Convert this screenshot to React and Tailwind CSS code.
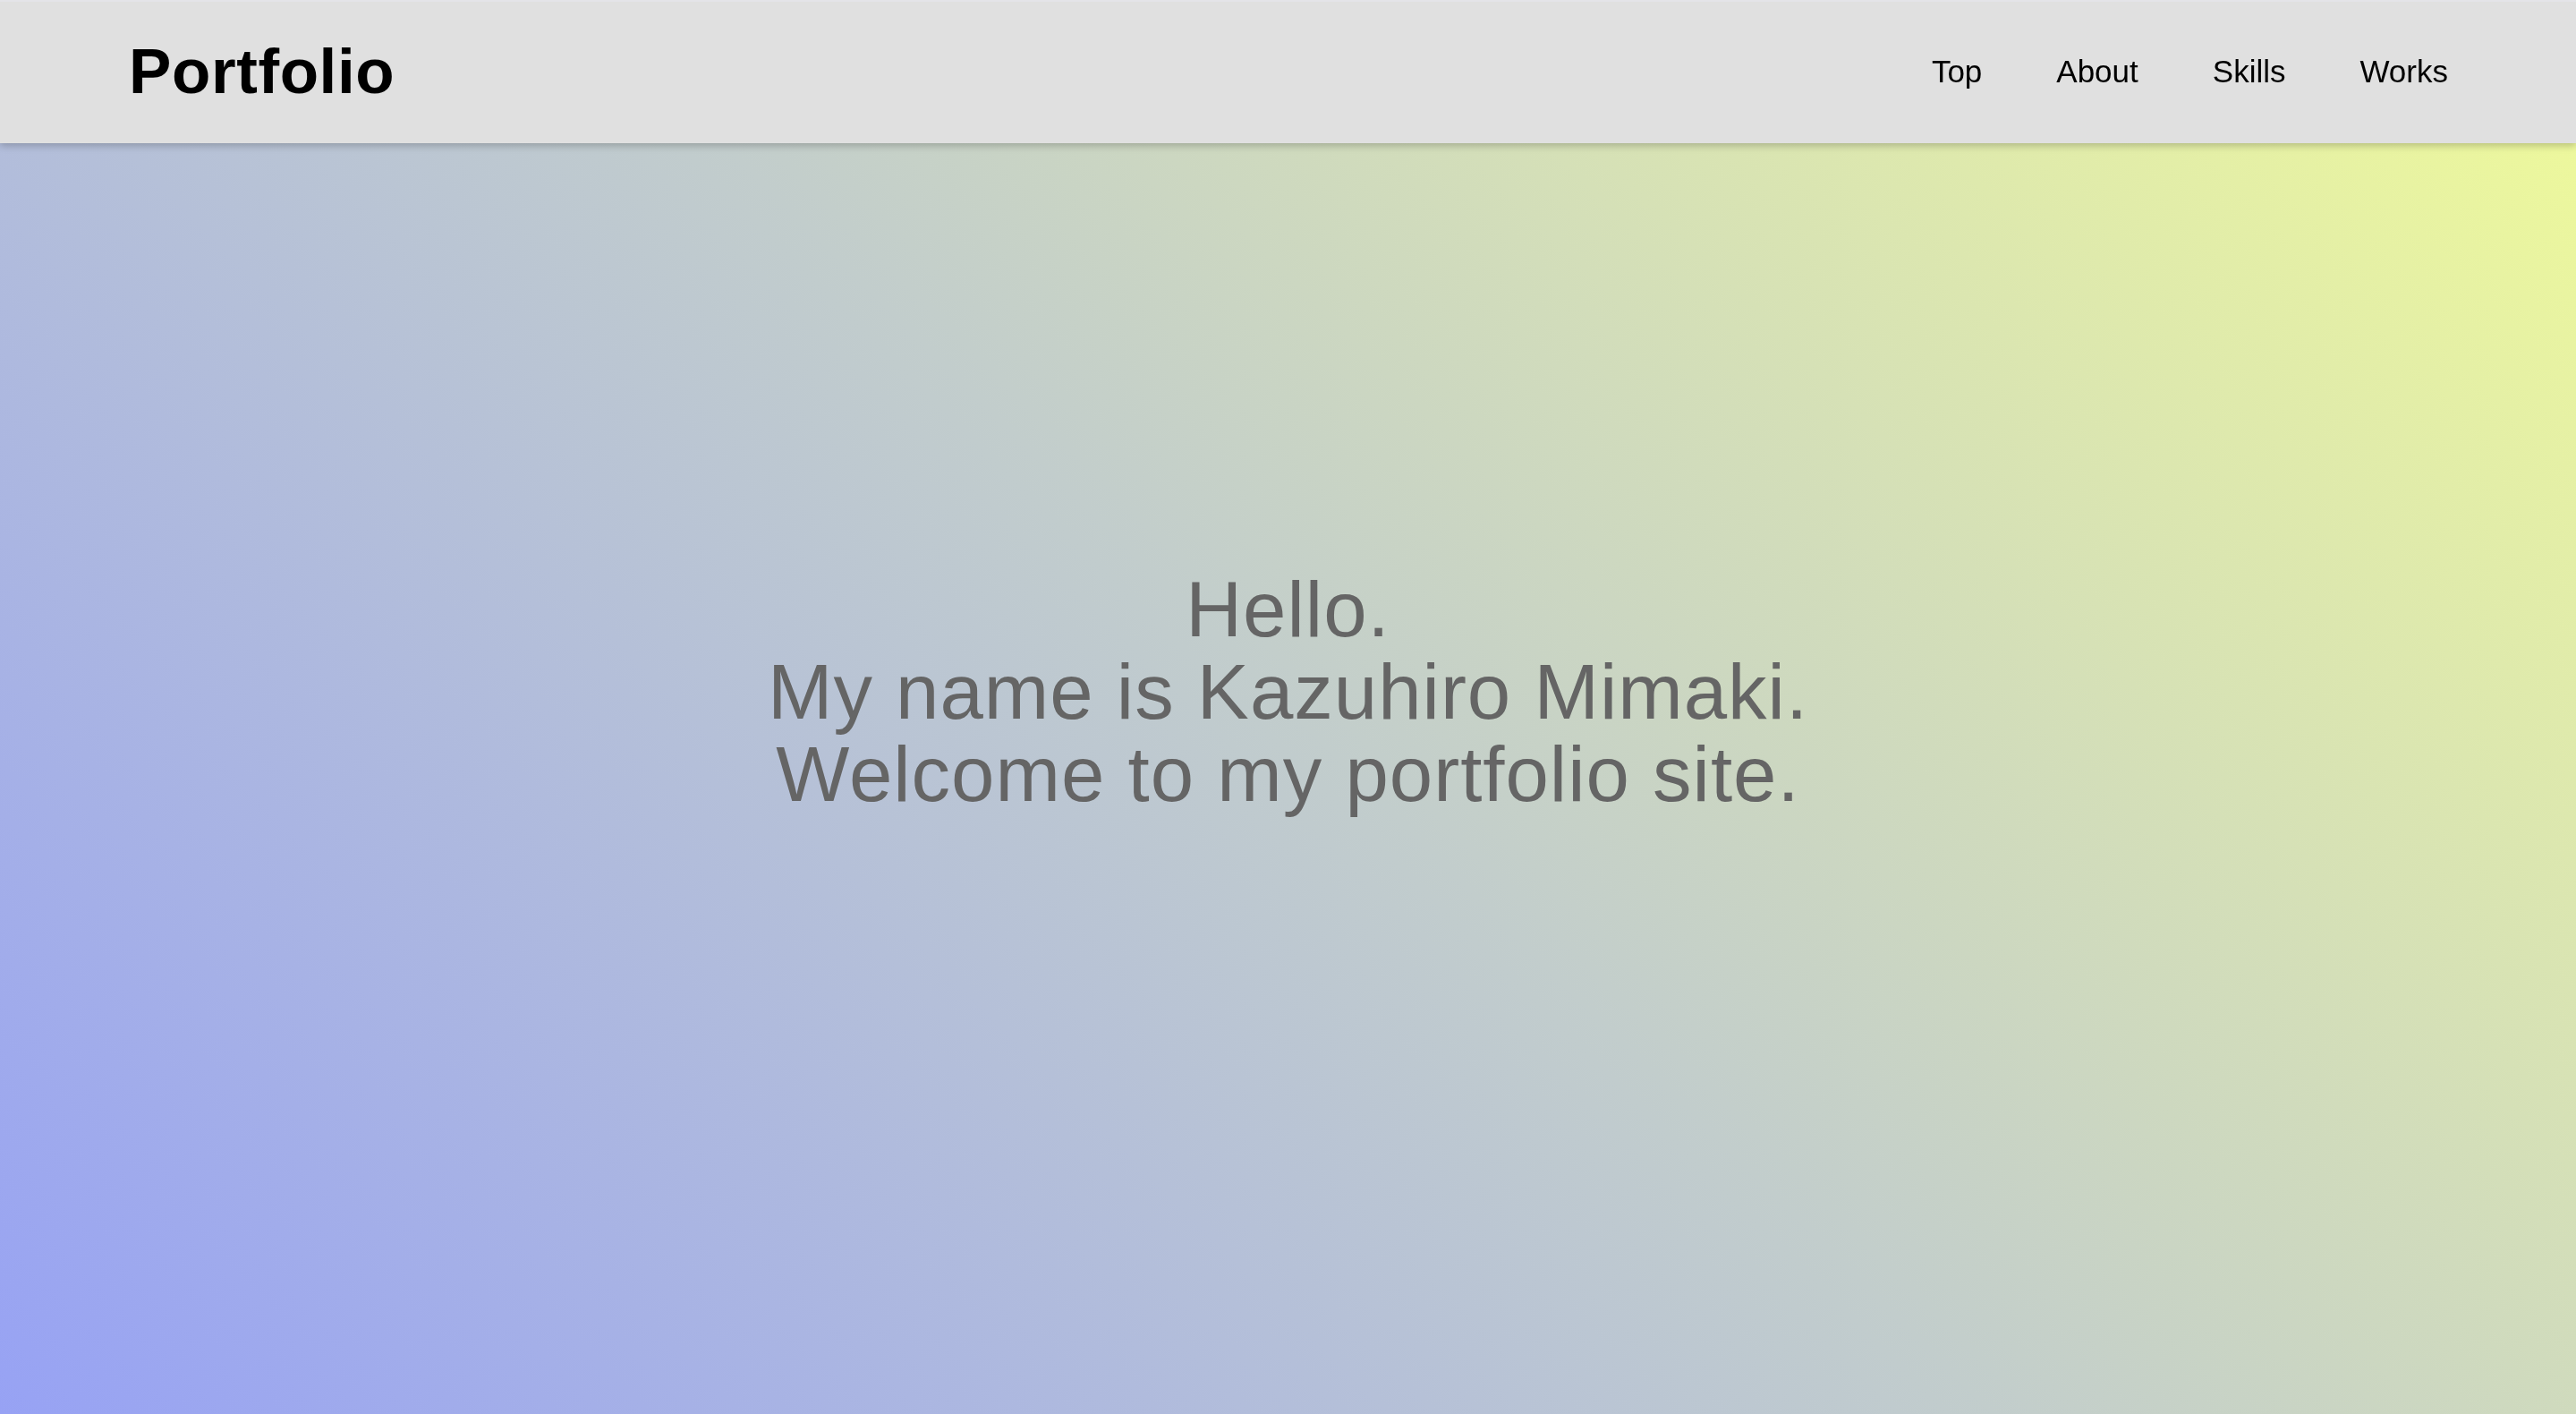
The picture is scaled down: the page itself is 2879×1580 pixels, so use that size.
export default function App() {
  return (
    <div className="relative min-h-screen w-full font-['Liberation_Sans',Arial,sans-serif]">
      <header className="fixed inset-x-0 top-0 z-10 flex h-[160px] items-center justify-between border-t-2 border-[#e4e4e8] bg-[#e0e0e0] pb-[3px] pl-[144px] pr-[143px] shadow-[0_3px_8px_rgba(0,0,0,0.22)]">
        <h1 className="text-[71px] font-bold leading-none tracking-[0.6px] text-black">Portfolio</h1>
        <nav className="flex items-center gap-[83px] text-[35px] leading-none text-black">
          <a href="#top">Top</a>
          <a href="#about">About</a>
          <a href="#skills">Skills</a>
          <a href="#works">Works</a>
        </nav>
      </header>
      <main className="flex h-screen w-full items-center justify-center bg-[linear-gradient(45deg,#97a2f4,#c2cdcc_50%,#f0fb99)] pb-[34px]">
        <p className="text-center text-[87px] leading-[92px] tracking-[1px] text-[#656565]">
          Hello.
          <br />
          My name is Kazuhiro Mimaki.
          <br />
          Welcome to my portfolio site.
        </p>
      </main>
    </div>
  );
}
